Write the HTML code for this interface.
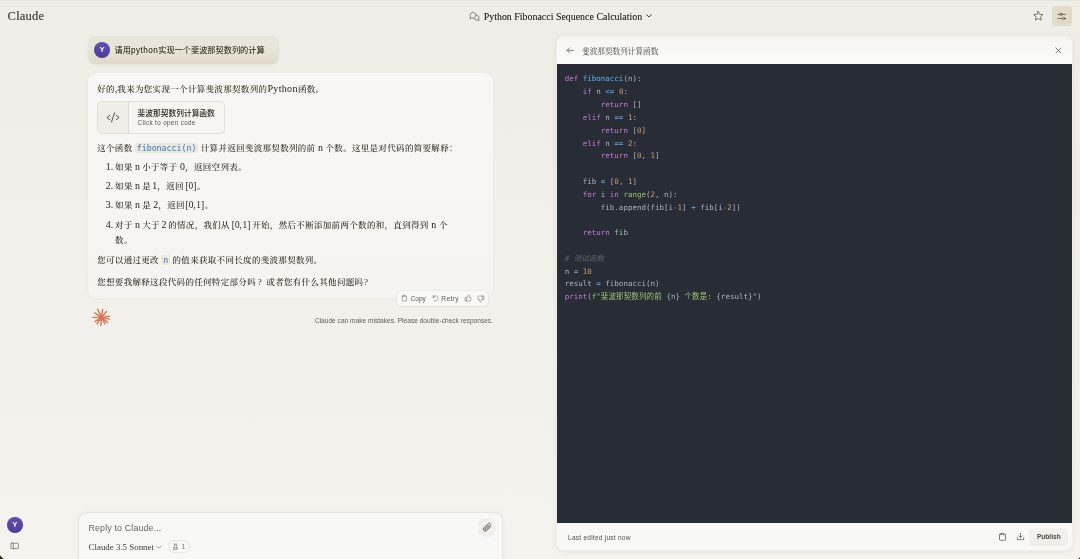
<!DOCTYPE html>
<html lang="zh">
<head>
<meta charset="utf-8">
<title>Python Fibonacci Sequence Calculation - Claude</title>
<style>
*{box-sizing:border-box;margin:0;padding:0}
html,body{width:1080px;height:559px;overflow:hidden}
body{position:relative;background:linear-gradient(180deg,#efeee6 0%,#f1efe8 30%,#f4f3ee 100%);font-family:"Liberation Sans","Noto Sans CJK SC",sans-serif;color:#3d3d3a;-webkit-font-smoothing:antialiased}
.abs{position:absolute}
.serif{font-family:"Liberation Serif","Noto Serif CJK SC",serif}
.sans{font-family:"Liberation Sans","Noto Sans CJK SC",sans-serif}
.mono{font-family:"Liberation Mono","Noto Sans CJK SC",monospace}
svg{display:block;overflow:visible}
.topline{left:0;top:0;width:1080px;height:1px;background:#e4e5e0}

/* header */
.logo{left:7.6px;top:8.2px;font-size:12.6px;line-height:16px;color:#4a4841;letter-spacing:.15px;text-shadow:0 0 .5px rgba(74,72,65,.6)}
.title{left:483.7px;top:9.6px;font-size:9.9px;line-height:14px;color:#1f1e1a;white-space:nowrap;letter-spacing:.02px;text-shadow:0 0 .3px rgba(31,30,26,.35)}
.setbtn{left:1052px;top:6.1px;width:20px;height:20.1px;border-radius:4px;background:#e1dbc9}

/* user bubble */
.ububble{left:88px;top:36px;width:190.7px;height:27.7px;border-radius:7px;background:linear-gradient(180deg,#e9e6da 0%,#e8e4d8 50%,#dfdac8 100%);box-shadow:0 1px 3px rgba(0,0,0,.04)}
.avatar{border-radius:50%;background:linear-gradient(180deg,#6250b0 0%,#4d3d96 100%);color:#fff;font-weight:700;text-align:center}
.utext{left:114.5px;top:44.2px;text-shadow:0 0 .3px rgba(41,38,27,.2);font-size:8.2px;line-height:14px;color:#29261b;white-space:nowrap}

/* assistant bubble */
.abubble{left:88px;top:73px;width:405px;height:224.6px;border-radius:9px;background:linear-gradient(180deg,#f8f7f5 0%,#f5f4f0 100%);box-shadow:0 1px 4px rgba(0,0,0,.035)}
.msg{font-size:8.5px;letter-spacing:.32px;line-height:14.5px;color:#29261b;white-space:nowrap;font-weight:500}
.L{display:inline-block;text-align:center;letter-spacing:0;font-size:9.9px;font-weight:400;color:#1c1a12;line-height:14.5px;vertical-align:baseline}
.icode{display:inline-block;text-align:center;letter-spacing:0;font-family:"DejaVu Sans Mono","Liberation Mono",monospace;font-size:8.25px;line-height:10.6px;height:10.6px;color:#377ac6;background:#ebe8dc;border-radius:2.5px;vertical-align:baseline;position:relative;top:-0.5px}
.card{left:97px;top:101.3px;width:128px;height:32.4px;border:0.5px solid #e1ded4;border-radius:5px;background:#f6f5f1;overflow:hidden}
.card .l{left:0;top:0;width:31px;height:100%;background:#f0eee6;border-right:0.5px solid #e1ded4}

/* actions */
.actions{left:397px;top:291px;width:91px;height:15px;border-radius:4px;background:#f8f8f6;box-shadow:0 0 0 .5px rgba(90,80,50,.10),0 1px 2px rgba(0,0,0,.03)}
.small{font-size:6.6px;line-height:10px;color:#5b5a55;white-space:nowrap}

/* input */
.inputbox{left:78.4px;top:512.1px;width:424.8px;height:60px;border-radius:9px;background:#f8f8f7;border:0.6px solid #e6e4dc;box-shadow:0 0 5px rgba(0,0,0,.04)}

/* panel */
.panel{left:557px;top:37px;width:515px;height:512.7px;border-radius:7px;background:#f8f8f6;box-shadow:0 0 0 .7px #f2f1ec,0 1px 7px rgba(0,0,0,.09);overflow:hidden}
.phead{left:0;top:0;width:100%;height:27.2px;background:linear-gradient(180deg,#f6f5f2,#fbfbfa)}
.pcode{left:0;top:27.2px;width:100%;height:458.6px;background:#282c34}
pre{position:absolute;left:7.7px;top:9.3px;font-family:"DejaVu Sans Mono","Liberation Mono","Noto Sans CJK SC",monospace;font-size:7.5px;line-height:12.82px;color:#abb2bf;white-space:pre}
.cj{letter-spacing:.13px;font-weight:400}
.k{color:#c678dd}.f{color:#61afef}.n{color:#d19a66}.o{color:#61afef}.b{color:#98c379}.c{color:#5c6370;font-style:italic}.s{color:#98c379}
</style>
</head>
<body>
<div id="root" class="abs" style="left:0;top:0;width:1080px;height:559px;will-change:transform">
<div class="abs topline"></div>

<!-- header -->
<div class="abs serif logo">Claude</div>
<div class="abs serif title">Python Fibonacci Sequence Calculation</div>
<div class="abs setbtn"></div>

<!-- user message -->
<div class="abs ububble"></div>
<div class="abs avatar sans" style="left:94px;top:42.2px;width:16px;height:16px;font-size:7px;line-height:16px">Y</div>
<div class="abs utext sans">请用<span style="letter-spacing:.45px">python</span>实现一个斐波那契数列的计算</div>

<!-- assistant message -->
<div class="abs abubble"></div>
<div class="abs msg serif" style="left:97.2px;top:81.5px">好的<span class="L" style="width:2.5px">,</span>我来为您实现一个计算斐波那契数列的<span class="L" style="width:30.6px;letter-spacing:.3px;font-size:10.1px">Python</span>函数。</div>
<div class="abs card">
  <div class="abs l"></div>
  <div class="abs sans" style="left:39.6px;top:6.5px;font-size:7.72px;line-height:10px;font-weight:500;color:#29261b;white-space:nowrap">斐波那契数列计算函数</div>
  <div class="abs sans" style="left:39.6px;top:16.2px;font-size:6.3px;line-height:9px;color:#55534c;white-space:nowrap;letter-spacing:.35px">Click to open code</div>
</div>
<div class="abs msg serif" style="left:97.2px;top:141px">这个函数<span class="icode" style="width:63.8px;margin:0 2.3px 0 2.2px"> fibonacci(n) </span>计算并返回斐波那契数列的前<span class="L" style="width:10.1px"> n </span>个数。这里是对代码的简要解释：</div>
<div class="abs msg serif" style="left:105.8px;top:159.9px"><span class="L" style="width:8px;text-align:left">1.</span></div>
<div class="abs msg serif" style="left:115.1px;top:159.9px">如果<span class="L" style="width:9.5px"> n </span>小于等于<span class="L" style="width:7.6px;text-align:right;padding-right:.3px"> 0</span>，返回空列表。</div>
<div class="abs msg serif" style="left:105.8px;top:178.9px"><span class="L" style="width:8px;text-align:left">2.</span></div>
<div class="abs msg serif" style="left:115.1px;top:178.9px">如果<span class="L" style="width:9.5px"> n </span>是<span class="L" style="width:6.3px;text-align:right;padding-right:.3px"> 1</span>，返回<span class="L" style="width:13.1px;text-align:right;padding-right:.6px;font-size:9.3px"> [0]</span>。</div>
<div class="abs msg serif" style="left:105.8px;top:198.2px"><span class="L" style="width:8px;text-align:left">3.</span></div>
<div class="abs msg serif" style="left:115.1px;top:198.2px">如果<span class="L" style="width:9.5px"> n </span>是<span class="L" style="width:7.3px;text-align:right;padding-right:.3px"> 2</span>，返回<span class="L" style="width:19.9px;text-align:right;padding-right:.6px;font-size:9.3px;word-spacing:-1.6px"> [0, 1]</span>。</div>
<div class="abs msg serif" style="left:105.8px;top:218px"><span class="L" style="width:8px;text-align:left">4.</span></div>
<div class="abs msg serif" style="left:115.1px;top:218px">对于<span class="L" style="width:9.5px"> n </span>大于<span class="L" style="width:8.3px"> 2 </span>的情况，我们从<span class="L" style="width:22.3px;font-size:9.3px;word-spacing:-1.6px"> [0, 1] </span>开始，然后不断添加前两个数的和，直到得到<span class="L" style="width:10.3px"> n </span>个</div>
<div class="abs msg serif" style="left:115.1px;top:232.5px">数。</div>
<div class="abs msg serif" style="left:97.2px;top:253.4px">您可以通过更改<span class="icode" style="width:9.2px;margin:0 2.2px 0 2.2px"> n </span>的值来获取不同长度的斐波那契数列。</div>
<div class="abs msg serif" style="left:97.2px;top:274.7px">您想要我解释这段代码的任何特定部分吗<span class="L" style="text-align:left;padding-left:1.8px;width:10.4px;font-size:9px">?</span>或者您有什么其他问题吗<span class="L" style="width:5px;font-size:9px">?</span></div>

<div class="abs actions"></div>
<div class="abs small sans" style="left:410.5px;top:293.5px">Copy</div>
<div class="abs small sans" style="left:441.3px;top:293.5px;letter-spacing:.35px">Retry</div>
<div class="abs small sans" style="right:587px;top:315.5px;color:#5f5e59">Claude can make mistakes. Please double-check responses.</div>

<!-- input -->
<div class="abs inputbox"></div>
<div class="abs sans" style="left:88.5px;top:521.9px;font-size:8.8px;line-height:13px;color:#65635c;white-space:nowrap;letter-spacing:.17px">Reply to Claude...</div>
<div class="abs serif" style="left:88.6px;top:541px;font-size:8.9px;line-height:13px;color:#3d3c37;white-space:nowrap">Claude 3.5 Sonnet</div>
<div class="abs sans" style="left:181.8px;top:541.9px;font-size:6.3px;line-height:10px;color:#6e6c65;white-space:nowrap">1</div>
<div class="abs" style="left:478.1px;top:518.1px;width:18.3px;height:18.5px;border-radius:7px;background:#f1f0ec"></div>
<div class="abs avatar sans" style="left:7px;top:517px;width:15.6px;height:15.6px;font-size:7.2px;line-height:15.6px">Y</div>

<!-- panel -->
<div class="abs panel">
  <div class="abs phead"></div>
  <div class="abs serif" style="left:25px;top:7.7px;font-size:7.65px;line-height:13px;color:#45443f;white-space:nowrap">斐波那契数列计算函数</div>
  <div class="abs pcode">
<pre><span class="k">def</span> <span class="f">fibonacci</span>(n):
    <span class="k">if</span> n <span class="o">&lt;=</span> <span class="n">0</span>:
        <span class="k">return</span> []
    <span class="k">elif</span> n <span class="o">==</span> <span class="n">1</span>:
        <span class="k">return</span> [<span class="n">0</span>]
    <span class="k">elif</span> n <span class="o">==</span> <span class="n">2</span>:
        <span class="k">return</span> [<span class="n">0</span>, <span class="n">1</span>]

    fib <span class="o">=</span> [<span class="n">0</span>, <span class="n">1</span>]
    <span class="k">for</span> i <span class="k">in</span> <span class="b">range</span>(<span class="n">2</span>, n):
        fib.append(fib[i<span class="o">-</span><span class="n">1</span>] <span class="o">+</span> fib[i<span class="o">-</span><span class="n">2</span>])

    <span class="k">return</span> fib

<span class="c"># <span class="cj">测试函数</span></span>
n <span class="o">=</span> <span class="n">10</span>
result <span class="o">=</span> fibonacci(n)
<span class="k">print</span>(<span class="s">f"<span class="cj">斐波那契数列的前</span> </span>{n}<span class="s"> <span class="cj">个数是</span>: </span>{result}<span class="s">"</span>)</pre>
  </div>
  <div class="abs small sans" style="left:11px;top:495.5px;color:#55534d;letter-spacing:.22px">Last edited just now</div>
  <div class="abs" style="left:472.3px;top:490.8px;width:38.3px;height:17.8px;border-radius:4.5px;background:linear-gradient(180deg,#f4f2ed,#efede6)"></div>
  <div class="abs small sans" style="left:479.9px;top:495.4px;font-weight:700;color:#4b4944">Publish</div>
</div>

<!-- icons -->
<svg class="abs" style="left:0;top:0" width="1080" height="559" viewBox="0 0 1080 559" fill="none" stroke-linecap="round" stroke-linejoin="round">
  <!-- chat icon -->
  <g stroke="#5d5b54" stroke-width="0.75">
    <path d="M470.1 18.6 L470.4 16.8 A2.9 2.9 0 1 1 471.9 18.1 Z"/>
    <path d="M476.3 15.1 A2.55 2.55 0 0 1 478.7 18.9 L479 20.4 L477.4 20 A2.55 2.55 0 0 1 474.2 18.5"/>
  </g>
  <!-- title chevron -->
  <path d="M646.6 14.8 L649 16.9 L651.4 14.8" stroke="#33322e" stroke-width="0.9"/>
  <!-- star -->
  <path d="M1038.3 11.4 L1039.7 14.3 L1042.9 14.7 L1040.5 16.9 L1041.2 20.1 L1038.3 18.5 L1035.4 20.1 L1036.1 16.9 L1033.7 14.7 L1036.9 14.3 Z" stroke="#55534c" stroke-width="0.75"/>
  <!-- sliders -->
  <g stroke="#4b4a44" stroke-width="0.75">
    <path d="M1058 14.3 H1065.8 M1058 18.5 H1065.8"/>
    <circle cx="1061" cy="14.3" r="1.15" fill="#e1dbc9"/>
    <circle cx="1063.6" cy="18.5" r="1.15" fill="#e1dbc9"/>
  </g>
  <!-- code card icon -->
  <g stroke="#4a4842" stroke-width="0.95">
    <path d="M109.8 115.3 L106.9 117.5 L109.8 119.7"/>
    <path d="M116.2 115.3 L119.1 117.5 L116.2 119.7"/>
    <path d="M114.5 112.8 L111.5 122"/>
  </g>
  <!-- action icons -->
  <g stroke="#6f6d66" stroke-width="0.55">
    <rect x="402.3" y="296.1" width="4.3" height="5" rx="0.5"/>
    <path d="M403.5 296.1 V295.6 H405.4 V296.1"/>
    <path d="M433 295.6 V297.4 H434.8"/>
    <path d="M433.1 297.3 A2.6 2.6 0 1 1 434.2 300.6"/>
    <path d="M465.4 297.6 H466.8 V301 H465.4 Z"/>
    <path d="M466.8 297.6 L468.4 295.2 A0.9 0.9 0 0 1 469.3 296.3 V297.3 H470.6 A0.5 0.5 0 0 1 471.1 297.9 L470.7 300.5 A0.6 0.6 0 0 1 470.1 301 H466.8"/>
    <path d="M483.6 299.4 H482.2 V296 H483.6 Z"/>
    <path d="M482.2 299.4 L480.6 301.8 A0.9 0.9 0 0 1 479.7 300.7 V299.7 H478.4 A0.5 0.5 0 0 1 477.9 299.1 L478.3 296.5 A0.6 0.6 0 0 1 478.9 296 H482.2"/>
  </g>
  <!-- spark -->
  <g stroke="#d97757" stroke-width="1.45" transform="translate(101.5 317.4)">
    <path d="M0 0 L-3.9 -8.2 M0 0 L1.1 -7.9 M0 0 L5 -5.9 M0 0 L7.9 -1.1 M0 0 L7.9 1.7 M0 0 L5.9 5 M0 0 L3.6 6.5 M0 0 L-0.6 7.9 M0 0 L-4.5 6.5 M0 0 L-6.5 4.2 M0 0 L-8.7 0 M0 0 L-6.8 -4.5"/>
    <circle cx="0" cy="0" r="1.6" fill="#d97757" stroke="none"/>
  </g>
  <!-- sidebar icon -->
  <g stroke="#66645d" stroke-width="0.7">
    <rect x="11" y="543.2" width="7.3" height="5.4" rx="0.5"/>
    <path d="M13.3 543.2 V548.6"/>
  </g>
  <!-- model chevron -->
  <path d="M156.7 546.2 L158.8 548.1 L160.9 546.2" stroke="#7a7871" stroke-width="0.7"/>
  <!-- badge -->
  <rect x="168.3" y="540.5" width="21.5" height="12.1" rx="6.05" stroke="#dddad0" stroke-width="0.6" fill="none"/>
  <g stroke="#77756e" stroke-width="0.65">
    <path d="M174.1 544.2 H176.8 M174.6 544.2 V546.2 L173.3 548.9 A0.4 0.4 0 0 0 173.7 549.5 H177.2 A0.4 0.4 0 0 0 177.6 548.9 L176.3 546.2 V544.2"/>
    <path d="M173.8 547.8 H177.1"/>
  </g>
  <!-- paperclip -->
  <g stroke="#4d4b45" stroke-width="0.8" transform="translate(487.1 527.4) rotate(45)">
    <path d="M1.9 -3.2 V2.6 A1.9 1.9 0 0 1 -1.9 2.6 V-3.6 A1.3 1.3 0 0 1 0.7 -3.6 V2.4 A0.65 0.65 0 0 1 -0.6 2.4 V-2.6"/>
  </g>
  <!-- panel arrow -->
  <path d="M573.4 50.4 H567.1 M569.7 47.8 L567.1 50.4 L569.7 53" stroke="#55534c" stroke-width="0.75"/>
  <!-- panel close -->
  <path d="M1055.9 47.9 L1060.9 52.9 M1060.9 47.9 L1055.9 52.9" stroke="#55534c" stroke-width="0.75"/>
  <!-- panel clipboard -->
  <g stroke="#55534c" stroke-width="0.75">
    <rect x="999.5" y="534" width="6" height="6.3" rx="0.7"/>
    <path d="M1001.2 534.9 V533.6 H1003.8 V534.9" stroke-width="0.6"/>
  </g>
  <!-- panel download -->
  <g stroke="#55534c" stroke-width="0.75">
    <path d="M1020.5 533.4 V537.6 M1018.7 535.9 L1020.5 537.6 L1022.3 535.9"/>
    <path d="M1017.4 537.6 V539.6 H1023.7 V537.6"/>
  </g>
</svg>
<!-- window corners -->
<div class="abs" style="left:0;top:549px;width:10px;height:10px;background:radial-gradient(circle at 100% 0%,transparent 0,transparent 11.2px,#2a1c0a 12.2px)"></div>
<div class="abs" style="left:1070px;top:549px;width:10px;height:10px;background:radial-gradient(circle at 0% 0%,transparent 0,transparent 12.6px,#111 13.4px)"></div>
</div>
</body>
</html>
